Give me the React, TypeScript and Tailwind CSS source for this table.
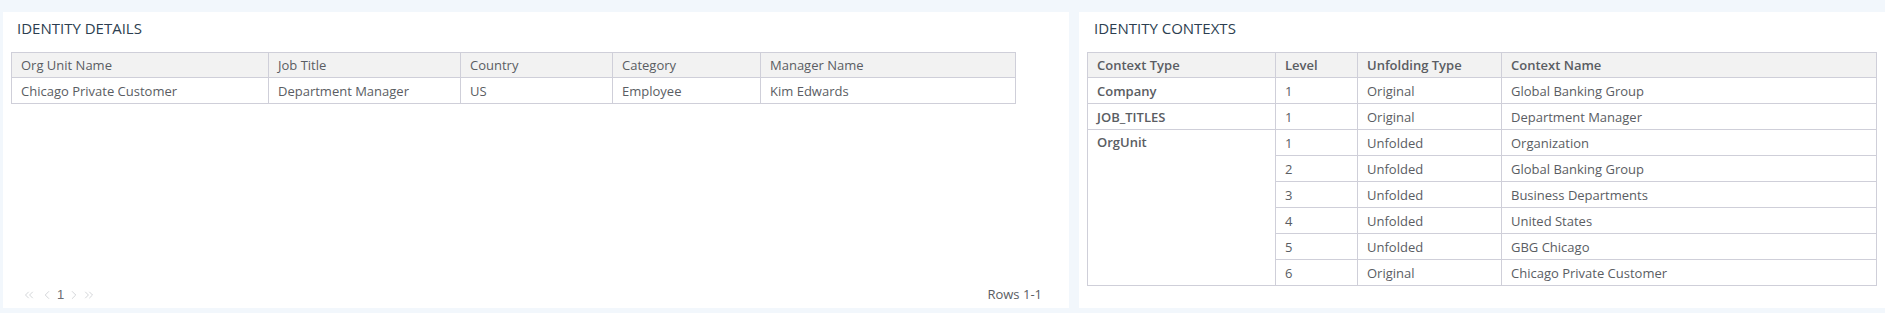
import React from 'react';
import { ChevronLeft, ChevronRight, ChevronsLeft, ChevronsRight } from 'lucide-react';

const detailCols = [
  { label: 'Org Unit Name', w: 'w-[258px]' },
  { label: 'Job Title', w: 'w-[192px]' },
  { label: 'Country', w: 'w-[152px]' },
  { label: 'Category', w: 'w-[148px]' },
  { label: 'Manager Name', w: '' },
];

const detailRow = ['Chicago Private Customer', 'Department Manager', 'US', 'Employee', 'Kim Edwards'];

const orgUnits = [
  ['1', 'Unfolded', 'Organization'],
  ['2', 'Unfolded', 'Global Banking Group'],
  ['3', 'Unfolded', 'Business Departments'],
  ['4', 'Unfolded', 'United States'],
  ['5', 'Unfolded', 'GBG Chicago'],
  ['6', 'Original', 'Chicago Private Customer'],
];

// separate borders so every row keeps its exact height
const th = 'h-[26px] px-[9px] py-0 leading-[18px] text-left align-middle border-t border-b border-r border-[#cfcfd9] bg-[#f2f2f2] first:border-l';
const td = 'h-[26px] px-[9px] py-0 leading-[18px] align-middle border-b border-r border-[#cfcfd9]';

export default function App() {
  return (
    <div
      className="flex h-[313px] w-full gap-[10px] overflow-hidden bg-[#f2f7fc] pt-[12px] pb-[5px] pl-[3px] text-[13px] text-[#5a5d63]"
      style={{ fontFamily: '"Open Sans", "Liberation Sans", sans-serif' }}
    >
      <section className="flex w-[1066px] flex-col bg-white">
        <h2 className="px-[14px] pt-[6px] pb-[14px] text-[15px] leading-[20px] text-[#2c3e50]">IDENTITY DETAILS</h2>
        <div className="px-[8px]">
          <table className="w-[1005px] table-fixed border-separate border-spacing-0">
            <thead>
              <tr>
                {detailCols.map((c) => (
                  <th key={c.label} className={`${th} ${c.w} font-normal`}>{c.label}</th>
                ))}
              </tr>
            </thead>
            <tbody>
              <tr>
                {detailRow.map((v, i) => (
                  <td key={i} className={`${td} ${i === 0 ? 'border-l' : ''}`}>{v}</td>
                ))}
              </tr>
            </tbody>
          </table>
        </div>
        <div className="mt-auto flex h-[22px] items-center justify-between pb-[5px] pl-[19px] pr-[27px]">
          <div className="flex items-center text-[#c2c4c8]">
            <ChevronsLeft size={14} strokeWidth={1.2} className="mr-[4px]" />
            <ChevronLeft size={14} strokeWidth={1.2} className="mr-[3px]" />
            <span className="mr-[3px] text-[13px] text-[#6b6e73]" style={{ fontFamily: '"Liberation Sans", sans-serif' }}>1</span>
            <ChevronRight size={14} strokeWidth={1.2} className="mr-[1px]" />
            <ChevronsRight size={14} strokeWidth={1.2} />
          </div>
          <span className="text-[13px] text-[#5a5d63]">Rows 1-1</span>
        </div>
      </section>

      <section className="flex flex-1 flex-col bg-white">
        <h2 className="px-[15px] pt-[6px] pb-[14px] text-[15px] leading-[20px] text-[#2c3e50]">IDENTITY CONTEXTS</h2>
        <div className="px-[8px]">
          <table className="w-[790px] table-fixed border-separate border-spacing-0">
            <thead>
              <tr>
                <th className={`${th} w-[189px] font-semibold`}>Context Type</th>
                <th className={`${th} w-[82px] font-semibold`}>Level</th>
                <th className={`${th} w-[144px] font-semibold`}>Unfolding Type</th>
                <th className={`${th} font-semibold`}>Context Name</th>
              </tr>
            </thead>
            <tbody>
              <tr>
                <td className={`${td} border-l font-semibold`}>Company</td>
                <td className={td}>1</td>
                <td className={td}>Original</td>
                <td className={td}>Global Banking Group</td>
              </tr>
              <tr>
                <td className={`${td} border-l font-semibold`}>JOB_TITLES</td>
                <td className={td}>1</td>
                <td className={td}>Original</td>
                <td className={td}>Department Manager</td>
              </tr>
              {orgUnits.map((r, i) => (
                <tr key={r[0]}>
                  {i === 0 && (
                    <td rowSpan={6} className={`${td} border-l align-top pt-[3px] font-semibold`}>OrgUnit</td>
                  )}
                  <td className={td}>{r[0]}</td>
                  <td className={td}>{r[1]}</td>
                  <td className={td}>{r[2]}</td>
                </tr>
              ))}
            </tbody>
          </table>
        </div>
      </section>
    </div>
  );
}
